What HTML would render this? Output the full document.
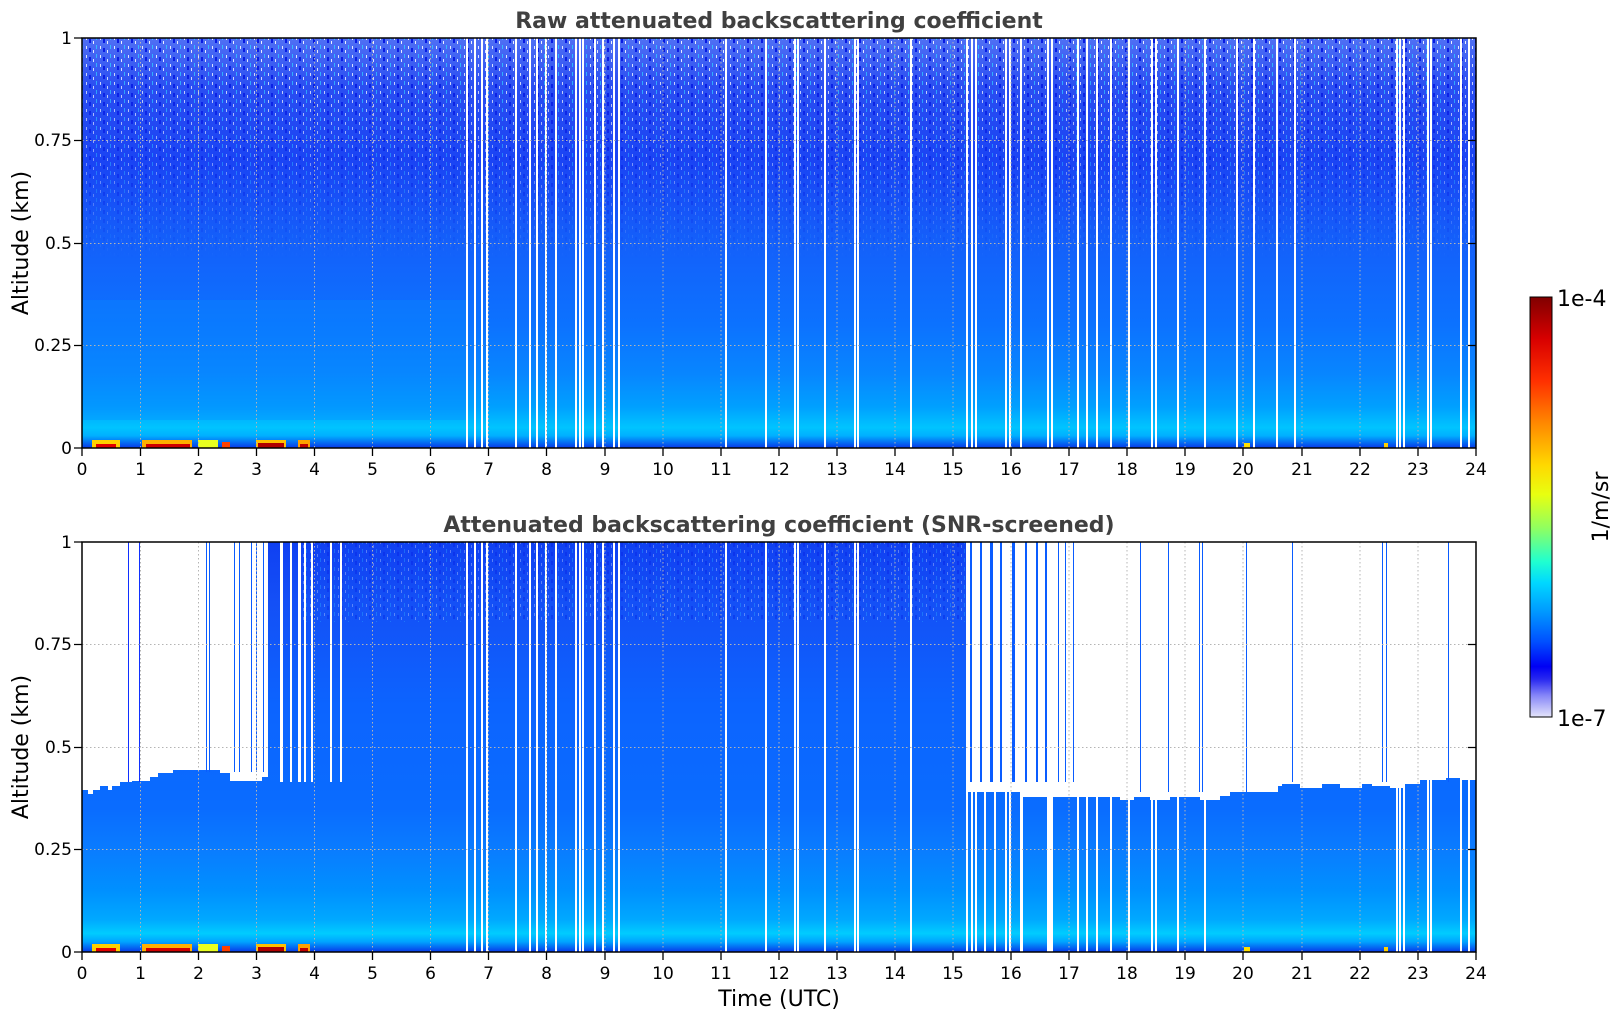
<!DOCTYPE html>
<html><head><meta charset="utf-8"><style>
html,body{margin:0;padding:0;background:#fff;}
svg{display:block;font-family:"DejaVu Sans","Liberation Sans",sans-serif;}
</style></head><body>
<svg width="1621" height="1020" viewBox="0 0 1621 1020" xmlns="http://www.w3.org/2000/svg">
<defs>
<linearGradient id="gTop" x1="0" y1="0" x2="0" y2="1">
<stop offset="0" stop-color="#5070f4"/>
<stop offset="0.12" stop-color="#2a4ef2"/>
<stop offset="0.3" stop-color="#1a44f4"/>
<stop offset="0.5" stop-color="#1460fa"/>
<stop offset="0.7" stop-color="#0c72ff"/>
<stop offset="0.82" stop-color="#0886ff"/>
<stop offset="0.9" stop-color="#00a0ff"/>
<stop offset="0.95" stop-color="#00c4ff"/>
<stop offset="0.97" stop-color="#00b0ff"/>
<stop offset="1" stop-color="#0838e8"/>
</linearGradient>
<linearGradient id="gBot" x1="0" y1="0" x2="0" y2="1">
<stop offset="0" stop-color="#1040f2"/>
<stop offset="0.15" stop-color="#1450f6"/>
<stop offset="0.4" stop-color="#0c64ff"/>
<stop offset="0.65" stop-color="#0a6cff"/>
<stop offset="0.75" stop-color="#0a7cff"/>
<stop offset="0.85" stop-color="#0090ff"/>
<stop offset="0.92" stop-color="#00a8ff"/>
<stop offset="0.955" stop-color="#00ccff"/>
<stop offset="0.975" stop-color="#00a4ff"/>
<stop offset="1" stop-color="#0838e8"/>
</linearGradient>
<linearGradient id="fade" x1="0" y1="0" x2="0" y2="1">
<stop offset="0" stop-color="#fff" stop-opacity="0.9"/>
<stop offset="0.5" stop-color="#fff" stop-opacity="0.5"/>
<stop offset="1" stop-color="#fff" stop-opacity="0"/>
</linearGradient>
<mask id="noiseMask"><rect x="0" y="0" width="1621" height="1020" fill="#000"/><rect x="82" y="38" width="1394" height="220" fill="url(#fade)"/></mask>
<linearGradient id="gCb" x1="0" y1="0" x2="0" y2="1">
<stop offset="0" stop-color="#800000"/>
<stop offset="0.1" stop-color="#d80000"/>
<stop offset="0.2" stop-color="#ff3000"/>
<stop offset="0.3" stop-color="#ff8800"/>
<stop offset="0.4" stop-color="#ffd800"/>
<stop offset="0.47" stop-color="#e8ff10"/>
<stop offset="0.55" stop-color="#90ff60"/>
<stop offset="0.63" stop-color="#20ffd0"/>
<stop offset="0.68" stop-color="#00d8ff"/>
<stop offset="0.75" stop-color="#0098ff"/>
<stop offset="0.82" stop-color="#0050ff"/>
<stop offset="0.88" stop-color="#0000f4"/>
<stop offset="0.91" stop-color="#2828f0"/>
<stop offset="0.95" stop-color="#8888f8"/>
<stop offset="1" stop-color="#e4e4fa"/>
</linearGradient>
<pattern id="noise" width="14" height="9" patternUnits="userSpaceOnUse">
<rect x="2" y="1" width="1" height="3" fill="#fff"/>
<rect x="9" y="5" width="1" height="3" fill="#fff"/>
<rect x="5" y="3" width="2" height="4" fill="#0010e0"/>
<rect x="12" y="0" width="1" height="4" fill="#30c8ff"/>
</pattern>
</defs>

<!-- ========== TOP PANEL ========== -->
<rect x="82" y="38" width="1394" height="410" fill="url(#gTop)"/>
<rect x="82" y="38" width="1394" height="220" fill="url(#noise)" mask="url(#noiseMask)"/>
<rect x="82" y="300" width="385" height="120" fill="#0a8aff" opacity="0.35"/>
<g fill="#fff">
<rect x="466" y="38" width="2" height="410"/><rect x="474" y="38" width="2" height="410"/><rect x="481" y="38" width="2" height="410"/><rect x="486" y="38" width="2" height="410"/>
<rect x="515" y="38" width="2" height="410"/><rect x="529" y="38" width="2" height="410"/><rect x="536" y="38" width="2" height="410"/><rect x="545" y="38" width="2" height="410"/><rect x="555" y="38" width="2" height="410"/>
<rect x="575" y="38" width="2" height="410"/><rect x="579" y="38" width="2" height="410"/><rect x="582" y="38" width="2" height="410"/><rect x="594" y="38" width="2" height="410"/><rect x="602" y="38" width="2" height="410"/>
<rect x="613" y="38" width="2" height="410"/><rect x="618" y="38" width="2" height="410"/><rect x="725" y="38" width="2" height="410"/><rect x="765" y="38" width="2" height="410"/>
<rect x="794" y="38" width="2" height="410"/><rect x="797" y="38" width="2" height="410"/><rect x="824" y="38" width="2" height="410"/><rect x="854" y="38" width="2" height="410"/><rect x="857" y="38" width="2" height="410"/>
<rect x="910" y="38" width="2" height="410"/><rect x="966" y="38" width="2" height="410"/><rect x="971" y="38" width="2" height="410"/><rect x="975" y="38" width="2" height="410"/>
<rect x="1005" y="38" width="2" height="410"/><rect x="1009" y="38" width="2" height="410"/><rect x="1020" y="38" width="2" height="410"/><rect x="1047" y="38" width="2" height="410"/><rect x="1051" y="38" width="2" height="410"/>
<rect x="1077" y="38" width="2" height="410"/><rect x="1086" y="38" width="2" height="410"/><rect x="1096" y="38" width="2" height="410"/><rect x="1110" y="38" width="2" height="410"/><rect x="1128" y="38" width="2" height="410"/>
<rect x="1151" y="38" width="2" height="410"/><rect x="1155" y="38" width="2" height="410"/><rect x="1177" y="38" width="2" height="410"/><rect x="1204" y="38" width="2" height="410"/><rect x="1236" y="38" width="2" height="410"/>
<rect x="1253" y="38" width="2" height="410"/><rect x="1276" y="38" width="2" height="410"/><rect x="1294" y="38" width="2" height="410"/><rect x="1396" y="38" width="2" height="410"/><rect x="1399" y="38" width="2" height="410"/>
<rect x="1403" y="38" width="2" height="410"/><rect x="1427" y="38" width="2" height="410"/><rect x="1430" y="38" width="2" height="410"/><rect x="1460" y="38" width="2" height="410"/><rect x="1468" y="38" width="2" height="410"/>
</g>
<!-- surface hot band top -->
<g>
<rect x="92" y="440" width="28" height="8" fill="#ffd000"/><rect x="96" y="444" width="20" height="4" fill="#e00000"/>
<rect x="142" y="440" width="50" height="8" fill="#ffb000"/><rect x="146" y="444" width="44" height="4" fill="#d00000"/>
<rect x="198" y="440" width="20" height="8" fill="#e8ff20"/><rect x="222" y="442" width="8" height="6" fill="#ff4000"/>
<rect x="256" y="440" width="30" height="8" fill="#ffc000"/><rect x="258" y="443" width="26" height="5" fill="#b00000"/>
<rect x="298" y="440" width="12" height="8" fill="#ffa000"/><rect x="300" y="444" width="8" height="4" fill="#c00000"/>
<rect x="1244" y="443" width="6" height="5" fill="#ffe000"/><rect x="1384" y="443" width="4" height="5" fill="#ffd000"/>
</g>
<!-- top grid -->
<g stroke="#b4b4b4" stroke-width="1" stroke-dasharray="1.5,2.5">
<line x1="82" y1="140.5" x2="1476" y2="140.5"/><line x1="82" y1="243.5" x2="1476" y2="243.5"/><line x1="82" y1="345.5" x2="1476" y2="345.5"/>
<line x1="140.5" y1="38" x2="140.5" y2="448"/><line x1="198.5" y1="38" x2="198.5" y2="448"/><line x1="256.5" y1="38" x2="256.5" y2="448"/><line x1="314.5" y1="38" x2="314.5" y2="448"/><line x1="372.5" y1="38" x2="372.5" y2="448"/><line x1="430.5" y1="38" x2="430.5" y2="448"/><line x1="488.5" y1="38" x2="488.5" y2="448"/><line x1="546.5" y1="38" x2="546.5" y2="448"/><line x1="605" y1="38" x2="605" y2="448"/><line x1="663" y1="38" x2="663" y2="448"/><line x1="721" y1="38" x2="721" y2="448"/><line x1="779" y1="38" x2="779" y2="448"/><line x1="837" y1="38" x2="837" y2="448"/><line x1="895" y1="38" x2="895" y2="448"/><line x1="953" y1="38" x2="953" y2="448"/><line x1="1011" y1="38" x2="1011" y2="448"/><line x1="1069" y1="38" x2="1069" y2="448"/><line x1="1127" y1="38" x2="1127" y2="448"/><line x1="1185" y1="38" x2="1185" y2="448"/><line x1="1243" y1="38" x2="1243" y2="448"/><line x1="1302" y1="38" x2="1302" y2="448"/><line x1="1360" y1="38" x2="1360" y2="448"/><line x1="1418" y1="38" x2="1418" y2="448"/>
</g>

<!-- ========== BOTTOM PANEL ========== -->
<rect x="82" y="542" width="1394" height="410" fill="url(#gBot)"/>
<rect x="300" y="542" width="670" height="80" fill="url(#noise)" opacity="0.3"/>
<path fill="#fff" d="M82 542 H268 V777 H262 V781 H230 V773 H220 V770 H173 V773 H158 V777 H150 V781 H132 V782 H120 V786 H112 V790 H108 V786 H100 V790 H93 V794 H88 V790 H82 Z"/>
<g fill="#fff">
<rect x="280" y="542" width="3" height="240"/><rect x="290" y="542" width="2" height="240"/><rect x="298" y="542" width="3" height="240"/><rect x="304" y="542" width="2" height="240"/><rect x="311" y="542" width="2" height="240"/><rect x="330" y="542" width="2" height="240"/><rect x="340" y="542" width="2" height="240"/>
<rect x="466" y="542" width="2" height="410"/><rect x="474" y="542" width="2" height="410"/><rect x="481" y="542" width="2" height="410"/><rect x="486" y="542" width="2" height="410"/>
<rect x="515" y="542" width="2" height="410"/><rect x="529" y="542" width="2" height="410"/><rect x="536" y="542" width="2" height="410"/><rect x="545" y="542" width="2" height="410"/><rect x="555" y="542" width="2" height="410"/>
<rect x="575" y="542" width="2" height="410"/><rect x="579" y="542" width="2" height="410"/><rect x="582" y="542" width="2" height="410"/><rect x="594" y="542" width="2" height="410"/><rect x="602" y="542" width="2" height="410"/>
<rect x="613" y="542" width="2" height="410"/><rect x="618" y="542" width="2" height="410"/><rect x="725" y="542" width="2" height="410"/><rect x="765" y="542" width="2" height="410"/>
<rect x="794" y="542" width="2" height="410"/><rect x="797" y="542" width="2" height="410"/><rect x="824" y="542" width="2" height="410"/><rect x="854" y="542" width="2" height="410"/><rect x="857" y="542" width="2" height="410"/>
<rect x="910" y="542" width="2" height="410"/>
<rect x="966" y="542" width="2" height="410"/><rect x="971" y="542" width="2" height="410"/><rect x="975" y="542" width="2" height="410"/><rect x="984" y="542" width="2" height="410"/><rect x="994" y="542" width="2" height="410"/>
<rect x="1005" y="542" width="2" height="410"/><rect x="1009" y="542" width="2" height="410"/><rect x="1020" y="542" width="3" height="410"/><rect x="1047" y="542" width="4" height="410"/><rect x="1051" y="542" width="2" height="410"/>
<rect x="1077" y="542" width="2" height="410"/><rect x="1086" y="542" width="2" height="410"/><rect x="1096" y="542" width="2" height="410"/><rect x="1110" y="542" width="2" height="410"/><rect x="1128" y="542" width="2" height="410"/>
<rect x="1151" y="542" width="2" height="410"/><rect x="1155" y="542" width="2" height="410"/><rect x="1177" y="542" width="2" height="410"/><rect x="1204" y="542" width="2" height="410"/>
<rect x="1396" y="542" width="2" height="410"/><rect x="1399" y="542" width="2" height="410"/><rect x="1403" y="542" width="2" height="410"/><rect x="1427" y="542" width="2" height="410"/><rect x="1430" y="542" width="2" height="410"/><rect x="1460" y="542" width="2" height="410"/><rect x="1468" y="542" width="2" height="410"/>
</g>
<path fill="#fff" d="M968 542 H1476 V780 H1460 V778 H1446 V780 H1420 V784 H1404 V788 H1390 V786 H1372 V784 H1362 V788 H1340 V784 H1322 V788 H1300 V784 H1282 V786 H1273 V784 H1278 V792 H1230 V796 H1220 V800 H1200 V797 H1170 V800 H1150 V797 H1134 V800 H1120 V797 H1090 V797 H1060 V797 H1020 V792 H968 Z"/>
<g fill="#0a5cff">
<rect x="128" y="542" width="1" height="240" fill="#1030ff"/><rect x="139" y="542" width="1" height="240" fill="#1030ff"/>
<rect x="206" y="542" width="1" height="230"/><rect x="209" y="542" width="1" height="230"/><rect x="234" y="542" width="1" height="230"/><rect x="239" y="542" width="1" height="230"/><rect x="251" y="542" width="1" height="230"/><rect x="256" y="542" width="1" height="230"/><rect x="263" y="542" width="1" height="230"/>
<rect x="1140" y="542" width="1" height="250"/><rect x="1168" y="542" width="1" height="250"/><rect x="1199" y="542" width="1" height="250"/><rect x="1202" y="542" width="1" height="250"/><rect x="1246" y="542" width="1" height="250"/><rect x="1292" y="542" width="1" height="240"/><rect x="1382" y="542" width="1" height="240"/><rect x="1386" y="542" width="1" height="240"/><rect x="1448" y="542" width="1" height="240"/>
<rect x="970" y="542" width="2" height="240"/><rect x="980" y="542" width="2" height="240"/><rect x="990" y="542" width="3" height="240"/><rect x="1000" y="542" width="2" height="240"/><rect x="1012" y="542" width="3" height="240"/><rect x="1025" y="542" width="2" height="240"/><rect x="1036" y="542" width="2" height="240"/><rect x="1045" y="542" width="2" height="240"/><rect x="1058" y="542" width="1" height="240"/><rect x="1065" y="542" width="1" height="240"/><rect x="1073" y="542" width="1" height="240"/>
</g>
<g>
<rect x="92" y="944" width="28" height="8" fill="#ffd000"/><rect x="96" y="948" width="20" height="4" fill="#e00000"/>
<rect x="142" y="944" width="50" height="8" fill="#ffb000"/><rect x="146" y="948" width="44" height="4" fill="#d00000"/>
<rect x="198" y="944" width="20" height="8" fill="#e8ff20"/><rect x="222" y="946" width="8" height="6" fill="#ff4000"/>
<rect x="256" y="944" width="30" height="8" fill="#ffc000"/><rect x="258" y="947" width="26" height="5" fill="#b00000"/>
<rect x="298" y="944" width="12" height="8" fill="#ffa000"/><rect x="300" y="948" width="8" height="4" fill="#c00000"/>
<rect x="1244" y="947" width="6" height="5" fill="#ffe000"/><rect x="1384" y="947" width="4" height="5" fill="#ffd000"/>
</g>
<g stroke="#b4b4b4" stroke-width="1" stroke-dasharray="1.5,2.5">
<line x1="82" y1="644.5" x2="1476" y2="644.5"/><line x1="82" y1="747.5" x2="1476" y2="747.5"/><line x1="82" y1="849.5" x2="1476" y2="849.5"/>
<line x1="140.5" y1="542" x2="140.5" y2="952"/><line x1="198.5" y1="542" x2="198.5" y2="952"/><line x1="256.5" y1="542" x2="256.5" y2="952"/><line x1="314.5" y1="542" x2="314.5" y2="952"/><line x1="372.5" y1="542" x2="372.5" y2="952"/><line x1="430.5" y1="542" x2="430.5" y2="952"/><line x1="488.5" y1="542" x2="488.5" y2="952"/><line x1="546.5" y1="542" x2="546.5" y2="952"/><line x1="605" y1="542" x2="605" y2="952"/><line x1="663" y1="542" x2="663" y2="952"/><line x1="721" y1="542" x2="721" y2="952"/><line x1="779" y1="542" x2="779" y2="952"/><line x1="837" y1="542" x2="837" y2="952"/><line x1="895" y1="542" x2="895" y2="952"/><line x1="953" y1="542" x2="953" y2="952"/><line x1="1011" y1="542" x2="1011" y2="952"/><line x1="1069" y1="542" x2="1069" y2="952"/><line x1="1127" y1="542" x2="1127" y2="952"/><line x1="1185" y1="542" x2="1185" y2="952"/><line x1="1243" y1="542" x2="1243" y2="952"/><line x1="1302" y1="542" x2="1302" y2="952"/><line x1="1360" y1="542" x2="1360" y2="952"/><line x1="1418" y1="542" x2="1418" y2="952"/>
</g>

<rect x="82" y="38" width="1394" height="410" fill="none" stroke="#000" stroke-width="1.5"/>
<rect x="82" y="542" width="1394" height="410" fill="none" stroke="#000" stroke-width="1.5"/>
<g stroke="#000" stroke-width="1.3">
<path d="M74 38H82M74 140.5H82M74 243.5H82M74 345.5H82M74 448H82 M1468 140.5H1476M1468 243.5H1476M1468 345.5H1476"/>
<path d="M74 542H82M74 644.5H82M74 747.5H82M74 849.5H82M74 952H82 M1468 644.5H1476M1468 747.5H1476M1468 849.5H1476"/>
<path d="M82 448v8M140.5 448v8M198.5 448v8M256.5 448v8M314.5 448v8M372.5 448v8M430.5 448v8M488.5 448v8M546.5 448v8M605 448v8M663 448v8M721 448v8M779 448v8M837 448v8M895 448v8M953 448v8M1011 448v8M1069 448v8M1127 448v8M1185 448v8M1243 448v8M1302 448v8M1360 448v8M1418 448v8M1476 448v8"/>
<path d="M82 952v8M140.5 952v8M198.5 952v8M256.5 952v8M314.5 952v8M372.5 952v8M430.5 952v8M488.5 952v8M546.5 952v8M605 952v8M663 952v8M721 952v8M779 952v8M837 952v8M895 952v8M953 952v8M1011 952v8M1069 952v8M1127 952v8M1185 952v8M1243 952v8M1302 952v8M1360 952v8M1418 952v8M1476 952v8"/>
</g>

<text x="779" y="28" text-anchor="middle" font-size="22" font-weight="bold" fill="#404040">Raw attenuated backscattering coefficient</text>
<text x="779" y="532" text-anchor="middle" font-size="22" font-weight="bold" fill="#404040">Attenuated backscattering coefficient (SNR-screened)</text>

<g font-size="17" fill="#000" text-anchor="end">
<text x="72" y="44">1</text><text x="72" y="146">0.75</text><text x="72" y="249">0.5</text><text x="72" y="351">0.25</text><text x="72" y="454">0</text>
<text x="72" y="548">1</text><text x="72" y="650">0.75</text><text x="72" y="753">0.5</text><text x="72" y="855">0.25</text><text x="72" y="958">0</text>
</g>
<g font-size="17" fill="#000" text-anchor="middle">
<text x="82" y="475">0</text><text x="140.5" y="475">1</text><text x="198.5" y="475">2</text><text x="256.5" y="475">3</text><text x="314.5" y="475">4</text><text x="372.5" y="475">5</text><text x="430.5" y="475">6</text><text x="488.5" y="475">7</text><text x="546.5" y="475">8</text><text x="605" y="475">9</text><text x="663" y="475">10</text><text x="721" y="475">11</text><text x="779" y="475">12</text><text x="837" y="475">13</text><text x="895" y="475">14</text><text x="953" y="475">15</text><text x="1011" y="475">16</text><text x="1069" y="475">17</text><text x="1127" y="475">18</text><text x="1185" y="475">19</text><text x="1243" y="475">20</text><text x="1302" y="475">21</text><text x="1360" y="475">22</text><text x="1418" y="475">23</text><text x="1476" y="475">24</text>
<text x="82" y="979">0</text><text x="140.5" y="979">1</text><text x="198.5" y="979">2</text><text x="256.5" y="979">3</text><text x="314.5" y="979">4</text><text x="372.5" y="979">5</text><text x="430.5" y="979">6</text><text x="488.5" y="979">7</text><text x="546.5" y="979">8</text><text x="605" y="979">9</text><text x="663" y="979">10</text><text x="721" y="979">11</text><text x="779" y="979">12</text><text x="837" y="979">13</text><text x="895" y="979">14</text><text x="953" y="979">15</text><text x="1011" y="979">16</text><text x="1069" y="979">17</text><text x="1127" y="979">18</text><text x="1185" y="979">19</text><text x="1243" y="979">20</text><text x="1302" y="979">21</text><text x="1360" y="979">22</text><text x="1418" y="979">23</text><text x="1476" y="979">24</text>
</g>
<text x="779" y="1006" text-anchor="middle" font-size="22" fill="#000">Time (UTC)</text>
<text transform="translate(28,243) rotate(-90)" text-anchor="middle" font-size="22" fill="#000">Altitude (km)</text>
<text transform="translate(28,747) rotate(-90)" text-anchor="middle" font-size="22" fill="#000">Altitude (km)</text>

<rect x="1530" y="297" width="22" height="420" fill="url(#gCb)" stroke="#000" stroke-width="1"/>
<text x="1557" y="306" font-size="22" fill="#000">1e-4</text>
<text x="1557" y="726" font-size="22" fill="#000">1e-7</text>
<text transform="translate(1608,507) rotate(-90)" text-anchor="middle" font-size="22" fill="#000">1/m/sr</text>
</svg>
</body></html>
